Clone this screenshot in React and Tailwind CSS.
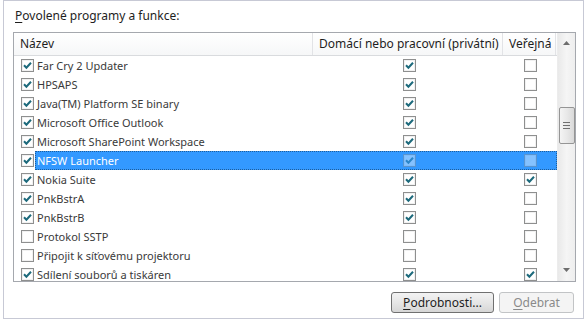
import React from "react";

const rows = [
  { name: "Far Cry 2 Updater", on: true, home: true, pub: false },
  { name: "HPSAPS", on: true, home: true, pub: false },
  { name: "Java(TM) Platform SE binary", on: true, home: true, pub: false },
  { name: "Microsoft Office Outlook", on: true, home: true, pub: false },
  { name: "Microsoft SharePoint Workspace", on: true, home: true, pub: false },
  { name: "NFSW Launcher", on: true, home: true, pub: false, selected: true },
  { name: "Nokia Suite", on: true, home: true, pub: true },
  { name: "PnkBstrA", on: true, home: true, pub: false },
  { name: "PnkBstrB", on: true, home: true, pub: false },
  { name: "Protokol SSTP", on: false, home: false, pub: false },
  { name: "Připojit k síťovému projektoru", on: false, home: false, pub: false },
  { name: "Sdílení souborů a tiskáren", on: true, home: true, pub: true },
];

function Check({ checked, faded }) {
  return (
    <svg width="13" height="13" viewBox="0 0 13 13" className={faded ? "opacity-40 shrink-0" : "shrink-0"}>
      <rect x="0.5" y="0.5" width="12" height="12" fill="#ffffff" stroke="#8e8f8f" />
      <rect x="1.5" y="1.5" width="10" height="10" fill="none" stroke="#f1f1f1" />
      {checked && (
        <path d="M3 6.3 L5.4 8.8 L10 3.8" fill="none" stroke="#1d6a7c" strokeWidth="2" />
      )}
    </svg>
  );
}

function Row({ row }) {
  const sel = row.selected;
  return (
    <div className="flex h-[19px] items-center pl-[7px]">
      <Check checked={row.on} />
      <div
        className={
          sel
            ? "ml-[1px] flex h-[19px] flex-1 items-center border border-dotted border-[#1e5d9a] bg-[#3399ff] text-white"
            : "ml-[1px] flex h-[19px] flex-1 items-center border border-transparent"
        }
      >
        <div className="w-[277px] pl-[1px] text-[11px]">{row.name}</div>
        <div className="flex w-[190px] justify-center pl-[2px]">
          <Check checked={row.home} faded={sel} />
        </div>
        <div className="flex w-[53px] justify-center pl-[2px]">
          <Check checked={row.pub} faded={sel} />
        </div>
      </div>
    </div>
  );
}

function Scrollbar() {
  return (
    <div className="flex w-[18px] flex-col items-center border-l border-[#ececec] bg-gradient-to-r from-[#e9e9e9] via-[#f5f5f5] to-[#eeeeee]">
      <div className="flex h-[18px] items-center justify-center pt-[2px]">
        <svg width="7" height="4" viewBox="0 0 7 4">
          <path d="M0 4 L3.5 0 L7 4 Z" fill="#6d6d6d" />
        </svg>
      </div>
      <div className="h-[56px]" />
      <div className="flex h-[37px] w-[16px] items-center justify-center rounded-[2px] border border-[#959595] bg-gradient-to-r from-[#f4f4f4] via-[#e8e8e8] to-[#d9d9d9]">
        <svg width="7" height="7" viewBox="0 0 7 7">
          <path d="M0 0.5 H7 M0 3.5 H7 M0 6.5 H7" stroke="#6f6f6f" strokeWidth="1" />
        </svg>
      </div>
      <div className="flex-1" />
      <div className="flex h-[18px] items-center justify-center pb-[4px]">
        <svg width="7" height="4" viewBox="0 0 7 4">
          <path d="M0 0 L3.5 4 L7 0 Z" fill="#6d6d6d" />
        </svg>
      </div>
    </div>
  );
}

export default function App() {
  return (
    <div className="h-[323px] w-[587px] bg-white text-[12px] leading-none text-[#3a3a3a]" style={{ fontFamily: '"Noto Sans", sans-serif' }}>
      <div className="ml-[3px] flex h-[319px] w-[581px] flex-col border border-[#c7c9d5] pl-[9px] pt-[7px]">
        <div className="flex h-[16px] items-center pl-[2px] text-[#1e1e1e]">
          <span className="underline underline-offset-2">P</span>ovolené programy a funkce:
        </div>

        <div className="mt-[8px] flex h-[250px] w-[563px] border border-[#a5a8ae]">
          <div className="flex flex-1 flex-col overflow-hidden">
            <div className="flex h-[23px] shrink-0 border-b border-[#d9dbde] bg-gradient-to-b from-white to-[#f6f7f8] text-[#1e1e1e]">
              <div className="flex w-[299px] items-center border-r border-[#e2e3e6] pl-[6px]">Název</div>
              <div className="flex w-[190px] items-center border-r border-[#e2e3e6] pl-[6px]">Domácí nebo pracovní (privátní)</div>
              <div className="flex w-[53px] items-center border-r border-[#e2e3e6] pl-[6px]">Veřejná</div>
            </div>
            <div className="flex flex-col">
              {rows.map((r) => (
                <Row key={r.name} row={r} />
              ))}
            </div>
          </div>
          <Scrollbar />
        </div>

        <div className="mt-[10px] flex w-[563px] justify-end gap-[5px] pr-[2px]">
          <button className="flex h-[21px] w-[103px] items-center justify-center rounded-[3px] border border-[#707070] bg-gradient-to-b from-[#f3f3f3] via-[#e6e6e6] to-[#d6d6d6] text-[#1e1e1e]">
            <span className="underline underline-offset-2">P</span>odrobnosti...
          </button>
          <button className="flex h-[21px] w-[75px] items-center justify-center rounded-[3px] border border-[#c2c4c6] bg-[#f4f4f4] text-[#8a8a8a]">
            <span className="underline underline-offset-2">O</span>debrat
          </button>
        </div>
      </div>
    </div>
  );
}
